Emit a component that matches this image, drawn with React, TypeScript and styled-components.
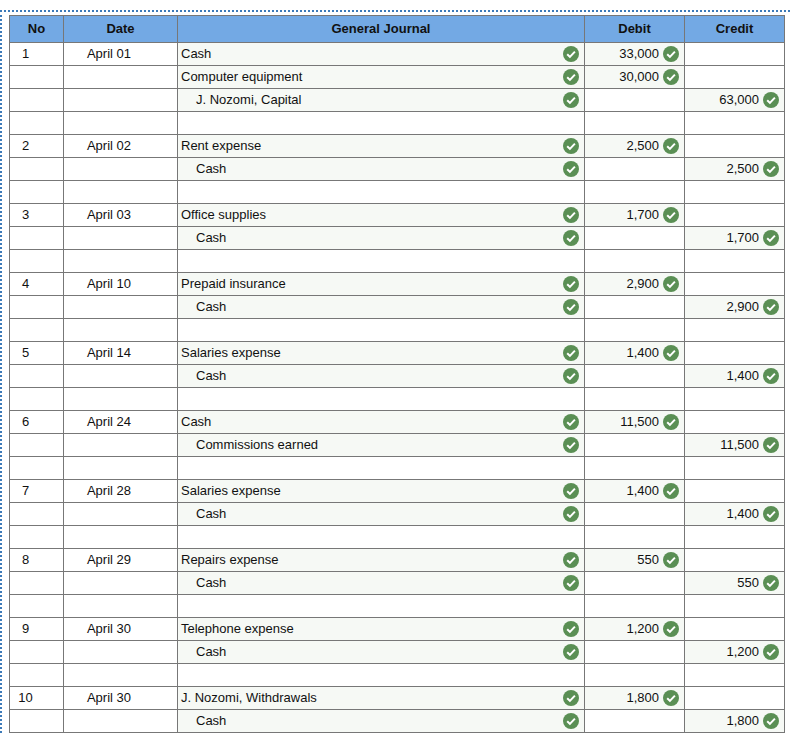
import React from "react";
import styled, { createGlobalStyle } from "styled-components";

const GlobalStyle = createGlobalStyle`
	body {
		margin: 0;
		background: #fff;
		font-family: "Liberation Sans", Arial, sans-serif;
		color: #111;
	}
`;

const Page = styled.div`
	margin: 10px 2px 0 0;
	padding: 3px 0 0 7px;
	border-top: 2px dotted #3d7ab8;
	border-left: 2px dotted #3d7ab8;
`;

const Table = styled.table`
	width: 776px;
	table-layout: fixed;
	border-collapse: collapse;
	font-size: 13px;
`;

const Head = styled.th`
	height: 25px;
	padding: 0 0 1px;
	border: 1px solid #777;
	background: #73a9e4;
	font-weight: bold;
	text-align: center;
`;

const Cell = styled.td<{ $filled?: boolean; $align?: "left" | "right" | "center"; $indent?: boolean; $shift?: number }>`
	height: 22px;
	padding: 0 ${(p) => p.$shift ?? 5}px 0 ${(p) => (p.$indent ? 18 : 3)}px;
	border: 1px solid #777;
	background: ${(p) => (p.$filled ? "#f6f9f5" : "#fff")};
	text-align: ${(p) => p.$align ?? "left"};
	white-space: nowrap;
`;

const Content = styled.div<{ $end?: boolean }>`
	display: flex;
	align-items: center;
	justify-content: ${(p) => (p.$end ? "flex-end" : "space-between")};
	gap: 4px;
`;

const Label = styled.span`
	position: relative;
	top: -1px;
`;

const Plain = styled(Label)`
	display: inline-block;
`;

const Mark = styled.svg`
	flex: none;
	width: 16px;
	height: 16px;
`;

const Check = () => (
	<Mark viewBox="0 0 16 16">
		<circle cx="8" cy="8" r="8" fill="#5a8f54" />
		<path d="M4.2 8.3 L6.9 10.9 L11.9 5.6" fill="none" stroke="#fff" strokeWidth="2" />
	</Mark>
);

type Line = { account: string; indent?: boolean; debit?: string; credit?: string };
type Entry = { date: string; lines: Line[] };

const entries: Entry[] = [
	{
		date: "April 01",
		lines: [
			{ account: "Cash", debit: "33,000" },
			{ account: "Computer equipment", debit: "30,000" },
			{ account: "J. Nozomi, Capital", indent: true, credit: "63,000" },
		],
	},
	{ date: "April 02", lines: [{ account: "Rent expense", debit: "2,500" }, { account: "Cash", indent: true, credit: "2,500" }] },
	{ date: "April 03", lines: [{ account: "Office supplies", debit: "1,700" }, { account: "Cash", indent: true, credit: "1,700" }] },
	{ date: "April 10", lines: [{ account: "Prepaid insurance", debit: "2,900" }, { account: "Cash", indent: true, credit: "2,900" }] },
	{ date: "April 14", lines: [{ account: "Salaries expense", debit: "1,400" }, { account: "Cash", indent: true, credit: "1,400" }] },
	{ date: "April 24", lines: [{ account: "Cash", debit: "11,500" }, { account: "Commissions earned", indent: true, credit: "11,500" }] },
	{ date: "April 28", lines: [{ account: "Salaries expense", debit: "1,400" }, { account: "Cash", indent: true, credit: "1,400" }] },
	{ date: "April 29", lines: [{ account: "Repairs expense", debit: "550" }, { account: "Cash", indent: true, credit: "550" }] },
	{ date: "April 30", lines: [{ account: "Telephone expense", debit: "1,200" }, { account: "Cash", indent: true, credit: "1,200" }] },
	{ date: "April 30", lines: [{ account: "J. Nozomi, Withdrawals", debit: "1,800" }, { account: "Cash", indent: true, credit: "1,800" }] },
];

const Amount = ({ value }: { value?: string }) => (
	<Cell $filled={!!value} $align="right">
		{value && (
			<Content $end>
				<Label>{value}</Label>
				<Check />
			</Content>
		)}
	</Cell>
);

export default function App() {
	return (
		<>
			<GlobalStyle />
			<Page>
				<Table>
					<colgroup>
						<col style={{ width: 54 }} />
						<col style={{ width: 114 }} />
						<col style={{ width: 407 }} />
						<col style={{ width: 100 }} />
						<col style={{ width: 100 }} />
					</colgroup>
					<thead>
						<tr>
							<Head>No</Head>
							<Head>Date</Head>
							<Head>General Journal</Head>
							<Head>Debit</Head>
							<Head>Credit</Head>
						</tr>
					</thead>
					<tbody>
						{entries.map((entry, i) => (
							<React.Fragment key={i}>
								{entry.lines.map((line, j) => (
									<tr key={j}>
										<Cell $align="center" $shift={25}><Plain>{j === 0 ? i + 1 : ""}</Plain></Cell>
										<Cell $align="center" $shift={26}><Plain>{j === 0 ? entry.date : ""}</Plain></Cell>
										<Cell $filled $indent={line.indent}>
											<Content>
												<Label>{line.account}</Label>
												<Check />
											</Content>
										</Cell>
										<Amount value={line.debit} />
										<Amount value={line.credit} />
									</tr>
								))}
								{i < entries.length - 1 && (
									<tr>
										<Cell />
										<Cell />
										<Cell />
										<Cell />
										<Cell />
									</tr>
								)}
							</React.Fragment>
						))}
					</tbody>
				</Table>
			</Page>
		</>
	);
}
